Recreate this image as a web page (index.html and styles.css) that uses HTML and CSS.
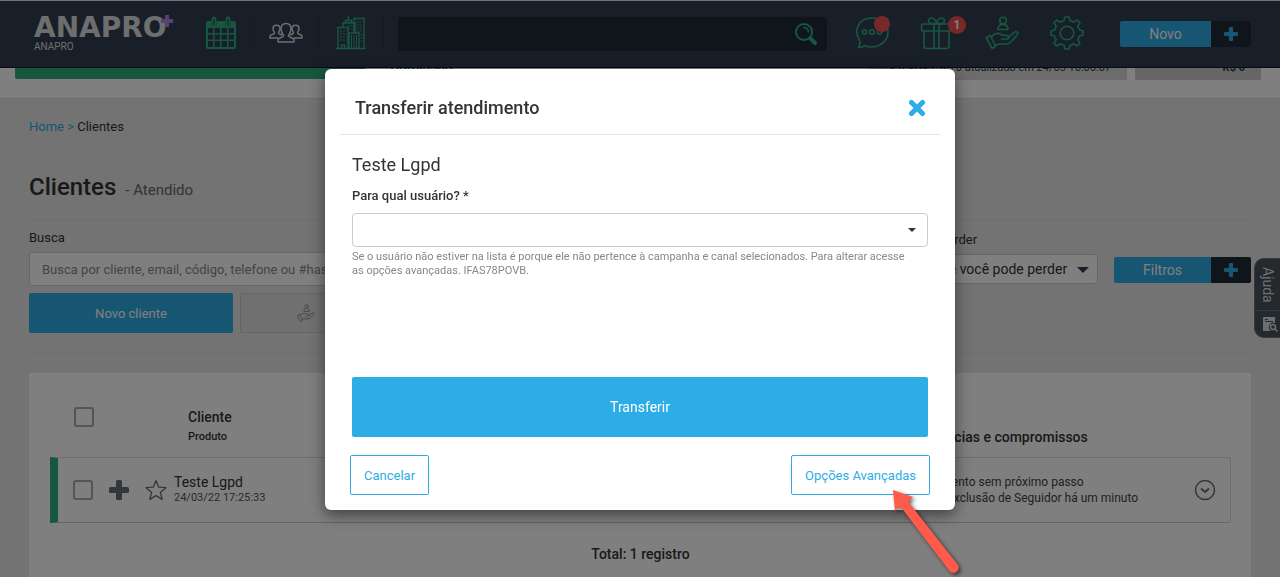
FILE: index.html
```html
<!DOCTYPE html>
<html lang="pt-BR">
<head>
    <meta charset="UTF-8">
    <meta name="viewport" content="width=device-width, initial-scale=1.0">
    <title>Anapro - Clientes</title>
    <link rel="stylesheet" href="styles.css">
</head>
<body>
    <!-- Shared icons -->
    <svg class="sprite" aria-hidden="true">
        <symbol id="icon-plus" viewBox="0 0 20 20">
            <path fill="currentColor" d="M8.500 0h3a1.500 1.500 0 0 1 1.500 1.500V7h5.500A1.500 1.500 0 0 1 20 8.500v3a1.500 1.500 0 0 1-1.500 1.500H13v5.500a1.500 1.500 0 0 1-1.500 1.500h-3A1.500 1.500 0 0 1 7 18.500V13H1.500A1.500 1.500 0 0 1 0 11.500v-3A1.500 1.500 0 0 1 1.500 7H7V1.500A1.500 1.500 0 0 1 8.500 0z"></path>
        </symbol>
        <symbol id="icon-hand" viewBox="0 0 34 34">
            <g fill="none" stroke="currentColor" stroke-width="1.600" stroke-linejoin="round" stroke-linecap="round">
                <circle cx="18" cy="4.500" r="3.300"></circle>
                <path d="M13 13.500c0-3.500 1.500-5 5-5s5 1.500 5 5z"></path>
                <path d="M1.300 21.500l4.200-2 5 11-3.300 2z"></path>
                <path d="M6 21c3-3 7-4.500 10-2.500 1.500 1 3 1 5.500 1 3 0 3 3.500 0 3.500h-5M23 22l6-5.500c2.500-2 5 0 3 2.500l-6 7c-1.500 1.500-3 2-5 2h-7l-4 1.500"></path>
            </g>
        </symbol>
    </svg>

    <!-- Top Bar -->
    <header class="navbar">
        <a class="brand" href="#">
            <span class="brand-logo">ANAPRO<svg class="brand-plus" viewBox="0 0 12 12" aria-hidden="true"><path fill="#b080e0" d="M4 0h4v4h4v4H8v4H4V8H0V4h4z"></path></svg></span>
            <span class="brand-name">ANAPRO</span>
        </a>
        <nav class="nav-icons nav-left">
            <a href="#" aria-label="Agenda">
                <svg width="32" height="34" viewBox="0 0 32 34">
                    <path fill="currentColor" d="M3 5h3.500v4a2.500 2.500 0 0 0 5 0V5h9v4a2.500 2.500 0 0 0 5 0V5H29a2 2 0 0 1 2 2v24a2 2 0 0 1-2 2H3a2 2 0 0 1-2-2V7a2 2 0 0 1 2-2z"></path>
                    <path fill="none" stroke="currentColor" stroke-width="1.800" d="M7.500 3a1.500 1.500 0 0 1 3 0v6a1.500 1.500 0 0 1-3 0zM21.500 3a1.500 1.500 0 0 1 3 0v6a1.500 1.500 0 0 1-3 0z"></path>
                    <path fill="#303f52" d="M3 12h5v5H3zM9.500 12H15v5H9.500zM16.500 12H22v5h-5.500zM23.500 12H29v5h-5.500zM3 18.500h5v5H3zM9.500 18.500H15v5H9.500zM16.500 18.500H22v5h-5.500zM23.500 18.500H29v5h-5.500zM3 25h5v6H3zM9.500 25H15v6H9.500zM16.500 25H22v6h-5.500zM23.500 25H29v6h-5.500z"></path>
                </svg>
            </a>
            <a class="nav-active" href="#" aria-label="Clientes">
                <svg width="34" height="22" viewBox="0 0 34 22">
                    <g fill="none" stroke="currentColor" stroke-width="1.500" stroke-linejoin="round">
                        <path d="M9 20v-2.500c0-1.500 5-2 5.500-3.500.3-1-2.500-3-2.500-7C12 3.500 14 1.500 17 1.500S22 3.500 22 7c0 4-2.800 6-2.500 7 .5 1.500 5.500 2 5.500 3.500V20z"></path>
                        <path d="M9.500 16H1v-2c0-1.500 4-1.500 4.500-3C5.800 10 4 9 4 6.500 4 4.500 5.500 3.200 7.500 3.200S11 4.500 11 6.500C11 9 9.200 10 9.500 11c.3 1.200 2.500 1.500 3.500 2.300"></path>
                        <path d="M24.500 16H33v-2c0-1.500-4-1.500-4.500-3-.3-1 1.500-2 1.500-4.500 0-2-1.500-3.300-3.500-3.300S23 4.500 23 6.500c0 2.500 1.800 3.500 1.500 4.500-.3 1.200-2.500 1.500-3.500 2.300"></path>
                    </g>
                </svg>
            </a>
            <a href="#" aria-label="Produtos">
                <svg width="30" height="34" viewBox="0 0 30 34">
                    <g fill="none" stroke="currentColor" stroke-width="1.400">
                        <path d="M0 32.500h30M2 32V11.500h10V32M7 11V7h12v10M9.500 7V4.500h6V7M12.500 4V0M18 17V2.500h10V32M13 32V17h10v15M5.500 32v-3h3v3"></path>
                        <path stroke-width="1" d="M15.500 19v13M18 19v13M20.500 19v13"></path>
                        <path stroke-width="1" stroke-dasharray="2 1" d="M4 15h6.500M4 18h6.500M4 21h6.500M4 24h6.500M12 10h5M12 13h5M20.500 6h6M20.500 9h6M20.500 12h6M20.500 15h6M24.500 19h2M24.500 22h2M24.500 25h2"></path>
                    </g>
                </svg>
            </a>
        </nav>
        <form class="nav-search">
            <input type="text" aria-label="Busca geral">
            <button type="button" aria-label="Buscar">
                <svg width="24" height="24" viewBox="0 0 24 24">
                    <circle cx="10" cy="10" r="8" fill="none" stroke="currentColor" stroke-width="2"></circle>
                    <path fill="none" stroke="currentColor" stroke-width="1.500" d="M9 5.500c3 0 5.500 1.500 5.500 5"></path>
                    <path stroke="currentColor" stroke-width="4" stroke-linecap="round" d="M16.500 16.500l4.500 4.500"></path>
                </svg>
            </button>
        </form>
        <nav class="nav-icons">
            <a href="#" aria-label="Mensagens">
                <svg width="34" height="34" viewBox="0 0 34 34">
                    <g fill="none" stroke="currentColor" stroke-width="1.600" stroke-linejoin="round">
                        <path d="M4.500 24C-2 14 4 2 17 2c9 0 16 6 16 14 0 9-8 15-17 15-2.500 0-4-.5-6-1.500-2 1.500-4 2-6.500 2 1.500-2 2-4 1-7.500z"></path>
                        <circle cx="9.500" cy="16" r="2.200"></circle>
                        <circle cx="17" cy="16" r="2.200"></circle>
                        <circle cx="24.500" cy="16" r="2.200"></circle>
                    </g>
                </svg>
                <span class="badge badge-dot"></span>
            </a>
            <a href="#" aria-label="Novidades">
                <svg width="34" height="34" viewBox="0 0 34 34">
                    <g fill="none" stroke="currentColor" stroke-width="1.600" stroke-linejoin="round">
                        <rect x="1.500" y="8" width="30" height="7" rx="1.500"></rect>
                        <path d="M4 15v15a2.500 2.500 0 0 0 2.500 2.500h20A2.500 2.500 0 0 0 29 30V15M14 8v24.500M19 8v24.500M16.500 7C13 8 9 8 8.500 5 8 1.500 14.500 0 16.500 7zM16.500 7c3.500 1 7.500 1 8-2C25 1.500 18.500 0 16.500 7z"></path>
                    </g>
                </svg>
                <span class="badge">1</span>
            </a>
            <a href="#" aria-label="Atendimento"><svg width="34" height="34"><use href="#icon-hand"></use></svg></a>
            <a href="#" aria-label="Configurações">
                <svg width="34" height="34" viewBox="0 0 34 34">
                    <g fill="none" stroke="currentColor" stroke-width="1.600" stroke-linejoin="round">
                        <path d="M14 4.500l1-3.500h4l1 3.500 4 1.700L27.200 4 30 6.800 27.800 10l1.700 4 3.500 1v4l-3.500 1-1.700 4 2.200 3.200-2.800 2.800-3.200-2.200-4 1.700-1 3.500h-4l-1-3.500-4-1.700L6.800 30 4 27.200 6.200 24l-1.700-4L1 19v-4l3.500-1 1.700-4L4 6.800 6.800 4 10 6.200z"></path>
                        <circle cx="17" cy="17" r="6.800"></circle>
                    </g>
                </svg>
            </a>
        </nav>
        <div class="btn-group">
            <button class="btn-main" type="button">Novo</button>
            <button class="btn-plus" type="button" aria-label="Mais opções"><svg width="14" height="14"><use href="#icon-plus"></use></svg></button>
        </div>
    </header>

    <!-- Summary strip, partly under the top bar -->
    <section class="summary">
        <div class="summary-goal"></div>
        <div class="summary-commission">Comissão</div>
        <div class="summary-box summary-update">Seu VGV é R$ 0 atualizado em 24/03 16:06:07</div>
        <div class="summary-box summary-total">R$ 0</div>
    </section>

    <main class="content">
        <div class="breadcrumb"><a href="#">Home &gt;</a> Clientes</div>
        <div class="page-title">
            <h1>Clientes</h1>
            <span>- Atendido</span>
        </div>

        <div class="filters">
            <div class="filter-search">
                <label for="busca">Busca</label>
                <input id="busca" type="text" placeholder="Busca por cliente, email, código, telefone ou #hashtag">
                <div class="filter-actions">
                    <button class="btn-new" type="button">Novo cliente</button>
                    <button class="btn-gray" type="button"><svg width="18" height="18"><use href="#icon-hand"></use></svg>Transferir</button>
                </div>
            </div>
            <div class="filter-side">
                <div class="filter-lose">
                    <label for="perder">Pode perder</label>
                    <div class="select-wrap">
                        <select id="perder"><option>O que você pode perder</option></select>
                    </div>
                </div>
                <div class="btn-group">
                    <button class="btn-main" type="button">Filtros</button>
                    <button class="btn-plus" type="button" aria-label="Mais filtros"><svg width="14" height="14"><use href="#icon-plus"></use></svg></button>
                </div>
            </div>
        </div>

        <div class="panel">
            <table class="clients">
                <thead>
                    <tr>
                        <th class="col-check"><input type="checkbox" aria-label="Selecionar todos"></th>
                        <th class="col-add"></th>
                        <th class="col-star"></th>
                        <th class="col-client">Cliente<small>Produto</small></th>
                        <th class="col-pending">Pendências e compromissos</th>
                        <th class="col-more"></th>
                    </tr>
                </thead>
                <tbody>
                    <tr>
                        <td class="col-check"><input type="checkbox" aria-label="Selecionar Teste Lgpd"></td>
                        <td class="col-add"><svg width="20" height="20"><use href="#icon-plus"></use></svg></td>
                        <td class="col-star">
                            <svg width="22" height="22" viewBox="0 0 22 22"><path fill="none" stroke="currentColor" stroke-width="1.300" stroke-linejoin="round" d="M11 1.500l2.700 6.700 7.300.5-5.600 4.700 1.800 7L11 16.600l-6.200 3.800 1.800-7L1 8.700l7.300-.5z"></path></svg>
                        </td>
                        <td class="col-client">Teste Lgpd<small>24/03/22 17:25:33</small></td>
                        <td class="col-pending">Atendimento sem próximo passo<br><span class="pending-item">Exclusão de Seguidor há um minuto</span></td>
                        <td class="col-more">
                            <svg width="22" height="22" viewBox="0 0 22 22"><g fill="none" stroke="currentColor" stroke-width="1.500"><circle cx="11" cy="11" r="9.500"></circle><path stroke-width="2" d="M7 9.500l4 3.500 4-3.500"></path></g></svg>
                        </td>
                    </tr>
                </tbody>
            </table>
            <p class="total">Total: 1 registro</p>
        </div>
    </main>

    <!-- Help tab -->
    <aside class="help-tab">
        <span class="help-text">Ajuda</span>
        <span class="help-icon">
            <svg width="16" height="16" viewBox="0 0 16 16">
                <path fill="currentColor" d="M1 1h12v6a4.500 4.500 0 0 0-4 8H1z"></path>
                <path stroke="#49525c" stroke-width="1" d="M3 3.500h3M3 5.500h8"></path>
                <circle cx="11" cy="11" r="2.500" fill="none" stroke="currentColor" stroke-width="1.500"></circle>
                <path stroke="currentColor" stroke-width="1.500" d="M13 13l2.500 2.500"></path>
            </svg>
        </span>
    </aside>

    <div class="backdrop"></div>

    <!-- Transfer dialog -->
    <div class="modal" role="dialog" aria-labelledby="modal-title">
        <div class="modal-header">
            <h2 id="modal-title">Transferir atendimento</h2>
            <button class="modal-close" type="button" aria-label="Fechar">
                <svg width="18" height="18" viewBox="0 0 18 18"><path stroke="currentColor" stroke-width="5" stroke-linecap="round" d="M3.500 3.500l11 11M14.500 3.500l-11 11"></path></svg>
            </button>
        </div>
        <form class="modal-body">
            <h3>Teste Lgpd</h3>
            <label for="usuario">Para qual usuário? *</label>
            <div class="select-wrap">
                <select id="usuario"><option></option></select>
            </div>
            <p class="help-block">Se o usuário não estiver na lista é porque ele não pertence à campanha e canal selecionados. Para alterar acesse as opções avançadas. IFAS78POVB.</p>
            <button class="btn-transfer" type="button">Transferir</button>
        </form>
        <div class="modal-footer">
            <button class="btn-outline" type="button">Cancelar</button>
            <button class="btn-outline" type="button">Opções Avançadas</button>
            <svg class="pointer" width="80" height="96" viewBox="0 0 80 96" aria-hidden="true">
                <path fill="#ff5a4a" d="M6 4l20 7-5 4.500L71 79c3 5-4 11-8.500 6L13 20l-5 5z"></path>
            </svg>
        </div>
    </div>
</body>
</html>
```

FILE: styles.css
```css
* {
    box-sizing: border-box;
}

body {
    font-family: Roboto, "Liberation Sans", sans-serif;
    font-size: 13px;
    color: #333;
    margin: 0;
    min-height: 100vh;
    overflow: hidden;
    background-color: #e6e6e6;
    display: flex;
    flex-direction: column;
}

a {
    color: #2dade6;
    text-decoration: none;
}

button,
input,
select {
    font-family: inherit;
    font-size: 14px;
    margin: 0;
}

button {
    border: none;
    padding: 0;
    cursor: pointer;
}

svg {
    display: block;
}

.sprite {
    position: absolute;
    width: 0;
    height: 0;
}

/* Top Bar */
.navbar {
    display: flex;
    align-items: center;
    height: 68px;
    padding: 0 29px 0 34px;
    background-color: #303f52;
    border-top: 1px solid #dde8ff;
    border-bottom: 1px solid #10151c;
    flex-shrink: 0;
}

.brand {
    width: 155px;
    color: #ddd;
}

.brand-logo {
    display: flex;
    font-family: "DejaVu Sans", sans-serif;
    font-size: 28px;
    line-height: 26px;
    font-weight: bold;
}

.brand-plus {
    width: 12px;
    height: 12px;
    margin-left: -6px;
}

.brand-name {
    display: block;
    font-size: 10px;
    line-height: 12px;
}

.nav-icons {
    display: flex;
    margin-bottom: 2px;
    color: #2fae7e;
}

.nav-icons a {
    position: relative;
    display: flex;
    align-items: center;
    justify-content: center;
    width: 65px;
    height: 34px;
    color: inherit;
}

.nav-left a {
    border-right: 1px solid #28364a;
}

.nav-icons .nav-active {
    color: #ddd;
}

.badge {
    position: absolute;
    top: 0;
    left: 44px;
    width: 18px;
    height: 18px;
    border-radius: 9px;
    background-color: #f05050;
    color: #fff;
    font-size: 12px;
    line-height: 18px;
    font-weight: bold;
    text-align: center;
}

.badge-dot {
    left: 35px;
    width: 16px;
    height: 16px;
}

.nav-search {
    display: flex;
    flex: 1;
    height: 34px;
    margin: 0 12px 0 14px;
    background-color: #202a38;
    border-radius: 2px;
}

.nav-search input {
    flex: 1;
    min-width: 0;
    border: none;
    background: none;
    color: #fff;
}

.nav-search button {
    padding: 0 9px;
    background: none;
    color: #2fae7e;
}

.btn-group {
    display: flex;
    height: 26px;
    border-radius: 2px;
    overflow: hidden;
}

.navbar .btn-group {
    margin-left: 21px;
}

.btn-main {
    background-color: #2dade6;
    color: #fff;
    width: 91px;
    flex: 1;
}

.btn-plus {
    display: flex;
    align-items: center;
    justify-content: center;
    width: 40px;
    background-color: #202a38;
    color: #2dade6;
}

/* Summary strip */
.summary {
    display: flex;
    height: 31px;
    padding: 0 19px 0 15px;
    overflow: hidden;
    background-color: #fff;
    border-bottom: 1px solid #d8d8d8;
    line-height: 16px;
    font-size: 11px;
    flex-shrink: 0;
}

.summary-goal {
    width: 350px;
    height: 11px;
    border-radius: 0 0 2px 2px;
    background-color: #2fae7e;
}

.summary-commission {
    flex: 1;
    padding-left: 25px;
    margin-top: -10px;
    font-size: 14px;
}

.summary-box {
    height: 22px;
    margin-top: -10px;
    padding: 2px 16px 0;
    border-radius: 0 0 2px 2px;
    background-color: #d8d8d8;
    text-align: right;
}

.summary-update {
    margin-right: 8px;
}

.summary-total {
    width: 126px;
    background-color: #ccc;
    font-weight: bold;
}

/* Page */
.content {
    display: flex;
    flex-direction: column;
    flex: 1;
    padding: 18px 29px 0;
}

.breadcrumb {
    font-size: 13px;
    line-height: 20px;
}

.page-title {
    display: flex;
    align-items: baseline;
    gap: 9px;
    margin-top: 34px;
    padding-bottom: 16px;
    border-bottom: 1px solid #dadada;
    line-height: 32px;
}

.page-title h1 {
    margin: 0;
    font-size: 24px;
    font-weight: 500;
}

.page-title span {
    font-size: 15px;
    line-height: 20px;
    color: #666;
}

.filters {
    display: flex;
    justify-content: space-between;
    padding: 9px 0 20px;
    border-bottom: 1px solid #dadada;
}

.filters label {
    display: block;
    line-height: 18px;
    margin-bottom: 5px;
}

.filter-search {
    width: 560px;
}

.filter-search input {
    width: 100%;
    height: 34px;
    padding: 0 12px;
    border: 1px solid #d0d0d0;
    border-radius: 3px;
    background-color: #fff;
    font-size: 13px;
}

.filter-search input::placeholder {
    color: #888;
}

.filter-actions {
    display: flex;
    gap: 7px;
    margin-top: 7px;
}

.filter-actions button {
    width: 204px;
    height: 40px;
    border-radius: 2px;
    font-size: 13px;
}

.filter-actions .btn-new {
    background-color: #2dade6;
    color: #fff;
}

.filter-actions .btn-gray {
    display: flex;
    align-items: center;
    gap: 14px;
    padding-left: 56px;
    background-color: #e0e0e0;
    border: 1px solid #ccc;
    color: #888;
}

.filter-side {
    display: flex;
    align-items: flex-start;
    gap: 16px;
    padding-top: 2px;
}

.filter-side .btn-group {
    width: 137px;
    margin-top: 26px;
}

.select-wrap {
    position: relative;
}

.select-wrap::after {
    content: "";
    position: absolute;
    right: 12px;
    top: 50%;
    margin-top: -2px;
    border: 4px solid transparent;
    border-top-color: #333;
    border-bottom: none;
}

.select-wrap select {
    appearance: none;
    width: 100%;
    height: 34px;
    padding: 0 29px 0 12px;
    border: 1px solid #ccc;
    border-radius: 4px;
    background-color: #fff;
    color: #333;
}

.filter-lose .select-wrap select {
    height: 30px;
}

.filter-lose .select-wrap::after {
    right: 9px;
    border-width: 6px 6px 0;
    border-top-color: #303f52;
}

/* Client list */
.panel {
    flex: 1;
    margin-top: 19px;
    padding: 0 20px 0 21px;
    background-color: #fff;
}

.clients {
    width: 100%;
    border-collapse: separate;
    border-spacing: 0;
    text-align: left;
}

.clients th,
.clients td {
    padding: 0;
}

.clients th {
    height: 84px;
    font-size: 14px;
    line-height: 20px;
    font-weight: 500;
    vertical-align: bottom;
    padding-bottom: 10px;
}

.clients td {
    height: 66px;
    border-top: 1px solid #dadada;
    border-bottom: 1px solid #ccc;
    color: #666e78;
}

.clients small {
    display: block;
    font-size: 11px;
}

.clients td small {
    color: #555;
}

.clients input {
    display: block;
    appearance: none;
    width: 20px;
    height: 20px;
    border: 2px solid #aaa;
    border-radius: 3px;
}

.clients .col-check {
    width: 59px;
    padding-left: 24px;
}

.clients th.col-check {
    padding-bottom: 30px;
}

.clients td.col-check {
    border-left: 8px solid #2fae7e;
    padding-left: 15px;
}

.clients .col-add {
    width: 36px;
}

.clients .col-star {
    width: 29px;
}

.clients td.col-client {
    font-size: 14px;
    line-height: 16px;
    color: #333;
}

.clients th.col-client {
    padding-left: 14px;
}

.clients .col-pending {
    width: 312px;
    padding-left: 25px;
}

.clients td.col-pending {
    font-size: 12px;
    line-height: 16px;
    color: #444;
}

.pending-item {
    padding-left: 40px;
}

.clients .col-more {
    width: 37px;
}

.clients td.col-more {
    border-right: 1px solid #dadada;
    border-radius: 0 3px 3px 0;
}

.total {
    margin: 21px 0 0;
    text-align: center;
    font-size: 14px;
    line-height: 20px;
    font-weight: 500;
}

/* Help tab */
.help-tab {
    position: fixed;
    top: 258px;
    right: 0;
    width: 26px;
    border-radius: 10px 0 0 10px;
    background-color: #49525c;
    border: 1px solid #65707c;
    border-right: none;
    color: #ddd;
}

.help-text {
    display: block;
    height: 51px;
    padding-top: 8px;
    writing-mode: vertical-rl;
    line-height: 25px;
    font-size: 14px;
}

.help-icon {
    display: block;
    padding: 5px 0 5px 7px;
    border-top: 1px solid #65707c;
}

/* Dialog */
.backdrop {
    position: fixed;
    inset: 0;
    background-color: rgba(0, 0, 0, 0.5);
}

.modal {
    position: fixed;
    top: 69px;
    left: 0;
    right: 0;
    width: 630px;
    max-width: 100%;
    margin: 0 auto;
    padding: 0 15px 15px;
    border-radius: 6px;
    background-color: #fff;
    box-shadow: 0 5px 15px rgba(0, 0, 0, 0.5);
}

.modal-header {
    display: flex;
    align-items: center;
    justify-content: space-between;
    padding: 26px 14px 14px 15px;
    border-bottom: 1px solid #e5e5e5;
}

.modal-header h2 {
    margin: 0;
    font-size: 18px;
    line-height: 25px;
    font-weight: 500;
}

.modal-close {
    background: none;
    color: #2dade6;
}

.modal-body {
    padding: 18px 12px;
}

.modal-body h3 {
    margin: 0 0 9px;
    font-size: 18px;
    line-height: 24px;
    font-weight: 400;
}

.modal-body label {
    display: block;
    margin-bottom: 7px;
    line-height: 20px;
    font-weight: 500;
}

.help-block {
    margin: 3px 0 99px;
    padding-right: 16px;
    font-size: 11px;
    line-height: 14px;
    color: #888;
}

.btn-transfer {
    width: 100%;
    height: 60px;
    border-radius: 2px;
    background-color: #2dade6;
    color: #fff;
}

.modal-footer {
    position: relative;
    display: flex;
    justify-content: space-between;
    padding: 0 10px;
}

.btn-outline {
    height: 40px;
    padding: 0 13px;
    border: 1px solid #2dade6;
    border-radius: 2px;
    background-color: #fff;
    color: #2dade6;
    font-size: 13px;
}

.pointer {
    position: absolute;
    left: 547px;
    top: 31px;
    filter: drop-shadow(2px 2px 2px rgba(0, 0, 0, 0.6));
}
```
